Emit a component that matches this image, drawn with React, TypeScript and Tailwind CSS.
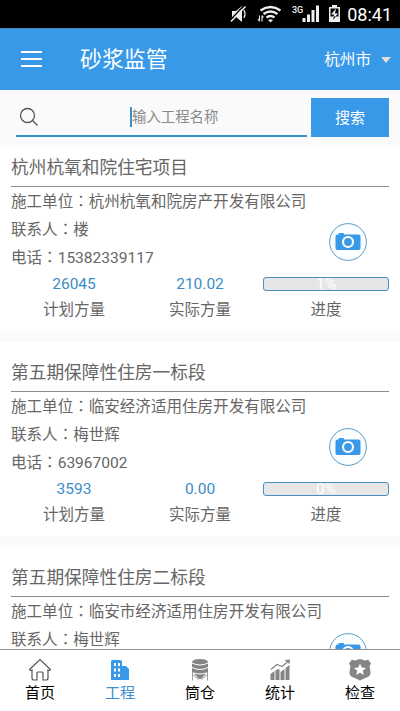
import React from "react";

type Project = { name: string; company: string; contact: string; details?: { phone: string; planned: string; actual: string; progress: string } };

const projects: Project[] = [
  { name: "杭州杭氧和院住宅项目", company: "杭州杭氧和院房产开发有限公司", contact: "楼", details: { phone: "15382339117", planned: "26045", actual: "210.02", progress: "1%" } },
  { name: "第五期保障性住房一标段", company: "临安经济适用住房开发有限公司", contact: "梅世辉", details: { phone: "63967002", planned: "3593", actual: "0.00", progress: "0%" } },
  { name: "第五期保障性住房二标段", company: "临安市经济适用住房开发有限公司", contact: "梅世辉" },
];

function StatusBar() {
  return (
    <div className="flex h-7 shrink-0 items-center justify-end bg-black pr-2 text-white">
      <svg className="h-7 w-[112px]" viewBox="0 0 112 28" fill="none">
        <path d="M3 11h4l6-5v16l-6-5H3z" fill="#eee" />
        <path d="M15 10q2 4 0 8" stroke="#ddd" strokeWidth="1.3" />
        <path d="M1 20.500L15 5.500" stroke="#000" strokeWidth="1.500" />
        <path d="M2 21.500L16.500 6.500" stroke="#eee" strokeWidth="1.500" />
        <path d="M31.500 10.500q10-7 20 0M34.500 14q7-5 14 0M37.500 17.500q4-3 8 0" stroke="#eee" strokeWidth="2.300" />
        <path d="M39 20q2.500-1.500 5 0L41.500 22.500z" fill="#eee" />
        <path d="M30.500 15.500v6M29 19l1.500 2M33 21.500v-6M34.500 17.500l-1.500-2" stroke="#ddd" strokeWidth="1.200" />
        <path d="M73.500 18h3v4h-3zM78 14.500h3V22h-3zM82.500 10h3v12h-3zM87 5.500h3V22h-3z" fill="#eee" />
        <path d="M100 7h3V5h5v2h3v15h-11z" fill="#eee" />
        <path d="M101.500 8.500h8v8h-8z" fill="#000" />
        <path d="M107 8.500l-5 6h3l-1 5 5-6h-3z" fill="#eee" />
        <path d="M105 16.500l-1 3.500 3-3.500z" fill="#000" />
        <text x="63" y="12.500" fontSize="9" fontWeight="500" fill="#eee" className="font-[Roboto]">3G</text>
      </svg>
      <span className="ml-[6px] w-[45px] pt-px text-right font-[Roboto] text-[18px] leading-7 whitespace-nowrap">08:41</span>
    </div>
  );
}

function Camera() {
  return (
    <svg className="size-[38px]" viewBox="0 0 38 38">
      <circle cx="19" cy="19" r="18.400" fill="#fafeff" stroke="#5b9cc4" strokeWidth="1" />
      <path d="M8.500 11.500h1V11q0-1 1-1H14q1 0 1 1v.5h14.500q2 0 2 1.800v11.900q0 1.800-2 1.800h-21q-2 0-2-1.800V13.300q0-1.800 2-1.800z" fill="#3899e8" />
      <circle cx="19" cy="19" r="5" fill="#3899e8" stroke="#fafeff" strokeWidth="2.200" />
    </svg>
  );
}

function Field({ label, value }: { label: string; value: string }) {
  return (
    <p className="h-7 text-[15.550px] leading-[26px] whitespace-nowrap">
      {label}
      <span className="font-['Noto_Sans_CJK_TC']">：</span>
      {value}
    </p>
  );
}

function Card({ p, first }: { p: Project; first: boolean }) {
  return (
    <article className={`shrink-0 bg-white px-[11px] text-[#666] ${first ? "h-[186px]" : "h-[194px] pt-2"}`}>
      <h2 className="flex h-[42px] items-center border-b border-[#8c8c8c] pt-[5px] text-[17.700px] leading-6">{p.name}</h2>
      <div className="relative">
        <Field label="施工单位" value={p.company} />
        <Field label="联系人" value={p.contact} />
        {p.details && <Field label="电话" value={p.details.phone} />}
        <div className="absolute top-9 right-[22px]"><Camera /></div>
      </div>
      {p.details && (
        <div className="grid grid-cols-[126px_126px_126px] text-center text-[15.500px] leading-[26px]">
          <span className="pt-px text-[#3a8cc8] leading-[25px]">{p.details.planned}</span>
          <span className="pt-px text-[#3a8cc8] leading-[25px]">{p.details.actual}</span>
          <div className="mt-[6px] flex h-[14px] items-center justify-center rounded-[3px] border border-[#4a8fc4] bg-[#e6e6e6] pt-[2px] text-[15.500px] leading-none text-white">{p.details.progress}</div>
          <span>计划方量</span>
          <span>实际方量</span>
          <span>进度</span>
        </div>
      )}
    </article>
  );
}

const tabs = [
  { label: "首页", icon: <path d="M1.500 11.500L12 1.500l10.500 10q-1 1.500-2.500.5V20q0 2-2 2h-3v-7q0-1-1-1h-4q-1 0-1 1v7H6q-2 0-2-2v-8q-1.500 1-2.500-.5z" fill="none" stroke="#555" strokeWidth="1.200" /> },
  { label: "工程", icon: <><path d="M4.500 2H12q2 0 2 2v4h4l3 3v11H3V3.500Q3 2 4.500 2z" fill="#3899e8" /><path d="M6 5h2v3H6zM10 5h2v3h-2zM6 10.500h2v3H6zM10 10.500h2v3h-2zM6 16h2v3H6zM10 16h2v3h-2z" fill="#fff" /></> },
  { label: "筒仓", icon: <g fill="#858585"><path d="M4 4.500Q4 1 12 1t8 3.500q-8 4-16 0z" /><path d="M4 5.500q8 4 16 0V9q-8 4-16 0z" /><path d="M4 10q8 4 16 0v4q-8 3-16 0z" /><path d="M6 15.800q6 1.200 12 0L13 21h-2z" /><path d="M4.500 13v9.500M19.500 13v9.500M4.500 16.500l6 5M19.500 16.500l-6 5" stroke="#858585" strokeWidth=".8" fill="none" /></g> },
  { label: "统计", icon: <g fill="#858585"><path d="M2.500 16l4-3v9h-4zM7.500 12l4-1v11h-4zM12.500 14l4-3v11h-4zM17.500 10l4-3v15h-4z" /><path d="M3 11.500l6-5 5 2 6-5" fill="none" stroke="#858585" strokeWidth="1.300" /><path d="M16.500 2L22 1.500 21.500 6z" /></g> },
  { label: "检查", icon: <><path d="M4 1.500q2 1.500 4.500.5L12 1l3.500 1q2.500 1 4.500-.5l3 4q-2 2-1 5l.5 4q0 4-4 5L12 22.500 5.500 19.500q-4-1-4-5l.5-4q1-3-1-5z" fill="#858585" /><path d="M12 5.500l1.800 4 4.200.4-3.200 2.800 1 4.200-3.800-2.200-3.800 2.200 1-4.200L6 9.900l4.200-.4z" fill="#fff" /></> },
];

export default function App() {
  return (
    <main className="flex h-[711px] w-[400px] flex-col overflow-hidden bg-[#fafafa] font-[Roboto,'Noto_Sans_CJK_SC',sans-serif]">
      <StatusBar />
      <header className="flex h-[62px] shrink-0 items-center border-t border-[#4689b9] bg-[#3899e8] pr-[9px] pl-[21px] text-white">
        <div className="flex w-[21px] flex-col gap-[5px] pb-[2px]">
          <i className="h-[2px] bg-white" /><i className="h-[2px] bg-white" /><i className="h-[2px] bg-white" />
        </div>
        <h1 className="ml-[38px] pt-[2px] text-[21.900px]">砂浆监管</h1>
        <span className="ml-auto pt-[2px] text-[15.600px]">杭州市</span>
        <svg className="ml-[10px] h-[6px] w-[10px]" viewBox="0 0 10 6"><path d="M0 0h10L5 6z" fill="#e2dedb" /></svg>
      </header>
      <section className="flex h-[54px] shrink-0 items-start gap-1 bg-[#fafafa] pt-2 pl-4">
        <div className="flex h-[39px] w-[291px] items-center border-b-2 border-[#3b8fca]">
          <svg className="ml-[3px] size-5" viewBox="0 0 20 20" fill="none" stroke="#555" strokeWidth="1.300"><circle cx="8.500" cy="8.500" r="7" /><path d="M13.500 13.500l5 5" /></svg>
          <i className="ml-[91px] h-5 w-[2px] bg-[#3b8fca]" />
          <span className="pt-[2px] text-[14.400px] text-[#8a8a8a]">输入工程名称</span>
        </div>
        <button className="h-[39px] w-[78px] bg-[#3899e8] pt-[2px] text-[15px] text-white">搜索</button>
      </section>
      <div className="flex min-h-0 flex-1 flex-col gap-[11px] overflow-hidden pt-px">
        {projects.map((p, i) => <Card key={p.name} p={p} first={i === 0} />)}
      </div>
      <nav className="grid h-[62px] shrink-0 grid-cols-5 border-t border-[#8f8f8f] bg-white text-[15px] text-black">
        {tabs.map((t, i) => (
          <div key={t.label} className={`flex flex-col items-center pt-2 ${i === 1 ? "text-[#3b8fd0]" : ""}`}>
            <svg className="size-6" viewBox="0 0 24 24">{t.icon}</svg>
            <span className="pt-px leading-5">{t.label}</span>
          </div>
        ))}
      </nav>
    </main>
  );
}
